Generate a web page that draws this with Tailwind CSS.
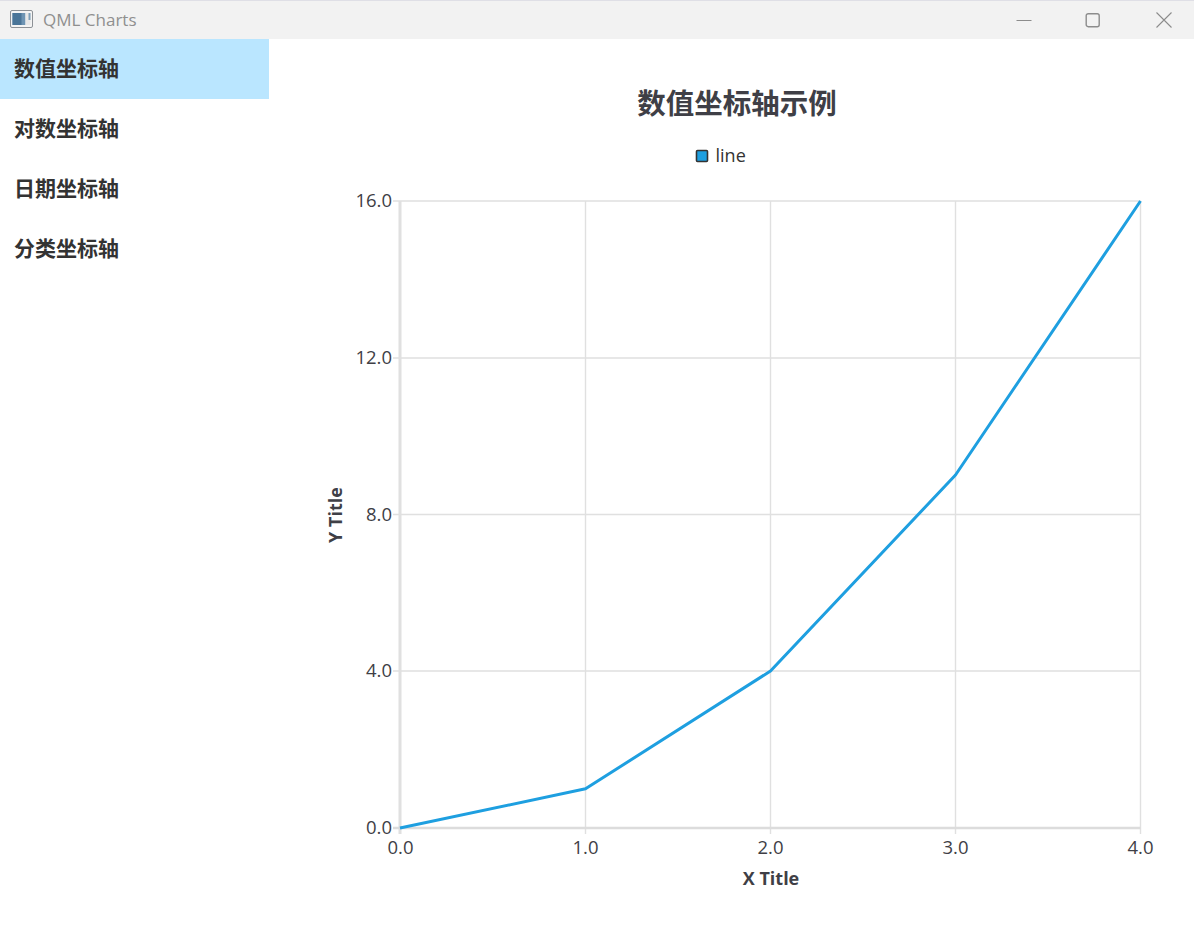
<!DOCTYPE html>
<html lang="zh">
<head>
<meta charset="utf-8">
<script src="https://cdn.jsdelivr.net/npm/@tailwindcss/browser@4"></script>
<title>QML Charts</title>
</head>
<body class="bg-white">
<div class="w-[1194px] h-[935px] flex flex-col overflow-hidden bg-white font-['Open_Sans','Noto_Sans_CJK_SC',sans-serif]">
  <header class="h-[39px] shrink-0 bg-[#f2f2f2] border-t border-[#dfdfe6] flex items-center">
    <svg class="ml-[10px] mt-[-2px]" width="24" height="18" viewBox="0 0 24 18" fill="none">
      <rect x="0.5" y="0.5" width="22" height="17" rx="1.5" fill="#f4f4f4" stroke="#8d9196"/>
      <rect x="2.5" y="3" width="13" height="12" fill="#6e94b3"/>
      <rect x="2.5" y="3" width="9" height="12" fill="#4a7598"/>
      <rect x="15.5" y="3" width="5" height="12" fill="#e8e8e8"/>
      <rect x="18.5" y="3" width="2" height="7" fill="#7f9fb8"/>
    </svg>
    <span class="ml-[9px] text-[17px] leading-none text-[#8f8f8f] mt-[-1px]">QML Charts</span>
    <div class="ml-auto flex items-center">
      <svg class="mr-[53px]" width="16" height="16" viewBox="0 0 16 16" fill="none" stroke="#8c8c8c" stroke-width="1"><path d="M0.5 8.5H15.5"/></svg>
      <svg class="mr-[55px]" width="16" height="16" viewBox="0 0 16 16" fill="none" stroke="#8c8c8c" stroke-width="1.4"><rect x="1.2" y="1.7" width="13" height="13" rx="2"/></svg>
      <svg class="mr-[22px]" width="16" height="16" viewBox="0 0 16 16" fill="none" stroke="#8c8c8c" stroke-width="1.1"><path d="M0.5 0.5L15.5 15.5M15.5 0.5L0.5 15.5"/></svg>
    </div>
  </header>
  <div class="flex flex-1 min-h-0">
    <nav class="w-[269px] shrink-0 flex flex-col text-[21px] font-bold text-[#333333] font-['Noto_Sans_CJK_SC',sans-serif]">
      <div class="h-[60px] flex items-center pl-[14px] pb-[2px] bg-[#bae6ff]">数值坐标轴</div>
      <div class="h-[60px] flex items-center pl-[14px] pb-[2px]">对数坐标轴</div>
      <div class="h-[60px] flex items-center pl-[14px] pb-[2px]">日期坐标轴</div>
      <div class="h-[60px] flex items-center pl-[14px] pb-[2px]">分类坐标轴</div>
    </nav>
    <main class="flex-1 min-w-0">
      <svg width="925" height="896" viewBox="269 39 925 896" class="block">
        <text x="737" y="114" text-anchor="middle" font-size="28.5" font-weight="700" fill="#3f3f46" font-family="'Noto Sans CJK SC',sans-serif">数值坐标轴示例</text>
        <rect x="696.5" y="150.5" width="11" height="11" rx="1" fill="#1e9fe0" stroke="#333" stroke-width="1.6"/>
        <text x="715.5" y="162" font-size="18" fill="#333">line</text>
        <g stroke="#e0e0e0" stroke-width="1.4" fill="none">
          <path d="M393 201H1140.5M393 358H1140.5M393 514.5H1140.5M393 671H1140.5"/>
          <path d="M585.5 201V834M770.5 201V834M955.5 201V834M1140.5 201V834"/>
        </g>
        <path d="M400 201V834" stroke="#e0e0e0" stroke-width="3" fill="none"/>
        <path d="M393 828H1140.5" stroke="#dcdcdc" stroke-width="2.4" fill="none"/>
        <polyline points="400,828 585.5,788.8 770.5,671 955.5,475 1140.5,201" fill="none" stroke="#1e9fe0" stroke-width="3" stroke-linejoin="round"/>
        <g font-size="18.5" fill="#3f3f46" text-anchor="end">
          <text x="392" y="207">16.0</text>
          <text x="392" y="364">12.0</text>
          <text x="392" y="520.5">8.0</text>
          <text x="392" y="677">4.0</text>
          <text x="392" y="834">0.0</text>
        </g>
        <g font-size="18.5" fill="#3f3f46" text-anchor="middle">
          <text x="400.5" y="853.5">0.0</text>
          <text x="585.5" y="853.5">1.0</text>
          <text x="770.5" y="853.5">2.0</text>
          <text x="955.5" y="853.5">3.0</text>
          <text x="1140.5" y="853.5">4.0</text>
        </g>
        <text x="771" y="885" text-anchor="middle" font-size="18" font-weight="700" fill="#3f3f46">X Title</text>
        <text transform="translate(342 515) rotate(-90)" text-anchor="middle" font-size="18" font-weight="700" fill="#3f3f46">Y Title</text>
      </svg>
    </main>
  </div>
</div>
</body>
</html>
